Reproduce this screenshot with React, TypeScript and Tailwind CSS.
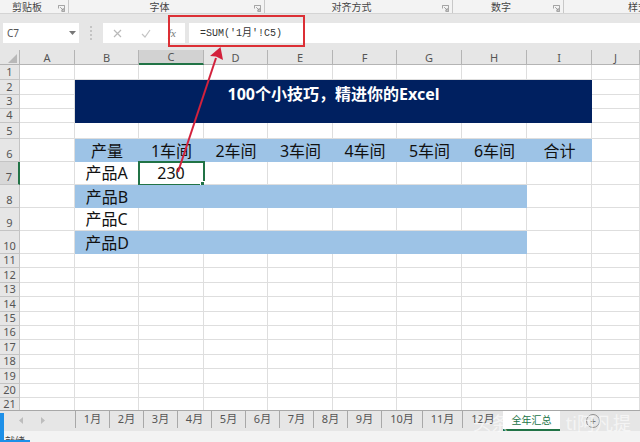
import React from 'react';

const COLUMNS = ['A', 'B', 'C', 'D', 'E', 'F', 'G', 'H', 'I', 'J'];
const ROWS = Array.from({ length: 21 }, (_, i) => i + 1);
const MONTHS = ['1月', '2月', '3月', '4月', '5月', '6月', '7月', '8月', '9月'];

// rows 6..10 hold the data table, keyed by column letter
const TABLE: Record<number, Record<string, string>> = {
  6: { B: '产量', C: '1车间', D: '2车间', E: '3车间', F: '4车间', G: '5车间', H: '6车间', I: '合计' },
  7: { B: '产品A', C: '230' },
  8: { B: '产品B' },
  9: { B: '产品C' },
  10: { B: '产品D' },
};

const isFilled = (row: number, col: string) => {
  if (row === 6) return 'BCDEFGHI'.includes(col);
  if (row === 8 || row === 10) return 'BCDEFGH'.includes(col);
  return false;
};

// B2:I4 is one merged cell, so its members are not rendered on their own
const isMerged = (row: number, col: string) => row >= 2 && row <= 4 && 'BCDEFGHI'.includes(col);

const Launcher = () => (
  <svg width="7" height="7" viewBox="0 0 8 8" className="absolute right-[3px] top-[5px]" fill="none" stroke="#8a8a8a" strokeWidth="0.9">
    <path d="M0.5 4V0.5H7.5V7.5H4" />
    <path d="M2.5 2.5L6 6M6 3.5V6H3.5" />
  </svg>
);

const RibbonGroup = ({ label, className }: { label: string; className: string }) => (
  <div className={`relative flex h-full items-center justify-center border-r border-[#c8c8c8] ${className}`}>
    <span className="text-[10px] leading-none text-[#444]">{label}</span>
    <Launcher />
  </div>
);

const FormulaBar = () => (
  <div className="flex h-[36px] items-start bg-[#e6e6e6] pt-[9px]">
    <div className="ml-[3px] flex h-[20px] w-[76px] items-center justify-between bg-white pl-[4px] pr-[3px]">
      <span className="text-[10px] text-[#555]">C7</span>
      <svg width="7" height="4" viewBox="0 0 7 4"><path d="M0 0H7L3.5 4Z" fill="#777" /></svg>
    </div>
    <div className="flex h-[20px] w-[24px] flex-col items-center justify-center gap-[2px]">
      <span className="h-[2px] w-[2px] bg-[#c4c4c4]" />
      <span className="h-[2px] w-[2px] bg-[#c4c4c4]" />
      <span className="h-[2px] w-[2px] bg-[#c4c4c4]" />
      <span className="h-[2px] w-[2px] bg-[#c4c4c4]" />
    </div>
    <div className="flex h-[20px] w-[82px] items-center bg-white pl-[10px]">
      <svg width="9" height="9" viewBox="0 0 9 9" fill="none" stroke="#b9b9b9" strokeWidth="1.2"><path d="M1 1L8 8M8 1L1 8" /></svg>
      <svg width="10" height="9" viewBox="0 0 10 9" fill="none" stroke="#c4c4c4" strokeWidth="1.2" className="ml-[19px]"><path d="M1 5L4 8L9 1" /></svg>
      <span className="ml-[17px] font-['Liberation_Serif',serif] text-[11px] italic leading-none text-[#777]">fx</span>
    </div>
    <div className="ml-[4px] flex h-[20px] flex-1 items-center bg-white pl-[11px]">
      <span className="font-['Liberation_Mono','Noto_Sans_CJK_SC',monospace] text-[10px] text-[#333]">=SUM('1月'!C5)</span>
    </div>
  </div>
);

const Sheet = () => (
  <div className="h-[360px] overflow-hidden bg-white">
    <div className="grid grid-cols-[20px_55px_64px_65px_64px_65px_64px_65px_65px_65px_48px] grid-rows-[15px_15px_15px_14px_14px_16px_23px_23px_23px_23px_23px_repeat(11,14.4px)]">
      {/* corner */}
      <div className="flex items-end justify-end border-b border-r border-[#b4b4b4] bg-[#e6e6e6] pb-[1px] pr-[2px]">
        <svg width="9" height="9" viewBox="0 0 9 9"><path d="M9 0V9H0Z" fill="#b8b8b8" /></svg>
      </div>
      {COLUMNS.map((col) => (
        <div
          key={col}
          className={`flex items-center justify-center border-r text-[11px] leading-none text-[#555] ${
            col === 'C' ? 'border-b-2 border-r-[#b4b4b4] border-b-[#217346] bg-[#d2d2d2]' : 'border-b border-[#b4b4b4] bg-[#e6e6e6]'
          }`}
        >
          {col}
        </div>
      ))}
      {/* merged title B2:I4 */}
      <div className="col-start-3 col-end-11 row-start-3 row-end-6 flex justify-center bg-[#002060] pt-[2px] text-[16px] font-bold leading-[24px] text-white">
        {'100个小技巧\uFF0C精进你的Excel'}
      </div>
      {ROWS.map((row) => (
        <React.Fragment key={row}>
          <div
            className={`flex items-end justify-center border-b text-[11px] leading-[14px] text-[#555] ${
              row === 7 ? 'border-r-2 border-b-[#c4c4c4] border-r-[#217346] bg-[#d8d8d8]' : 'border-r border-[#c4c4c4] bg-[#e6e6e6]'
            }`}
          >
            {row}
          </div>
          {COLUMNS.filter((col) => !isMerged(row, col)).map((col) => {
            const filled = isFilled(row, col);
            const selected = row === 7 && col === 'C';
            return (
              <div
                key={col}
                className={`relative flex items-center justify-center text-[16px] leading-none text-[#111] ${
                  filled ? 'bg-[#9dc3e6]' : 'border-b border-r border-[#dedede]'
                } ${selected ? 'outline-2 -outline-offset-1 outline-[#217346]' : ''}`}
              >
                {TABLE[row]?.[col]}
                {selected && <span className="absolute -bottom-[2px] -right-[2px] h-[5px] w-[5px] border border-white bg-[#217346]" />}
              </div>
            );
          })}
        </React.Fragment>
      ))}
    </div>
  </div>
);

const Tab = ({ label, className = 'w-[34px]' }: { label: string; className?: string }) => (
  <div className={`flex h-[17px] items-center justify-center border-r border-[#a8a8a8] text-[11px] text-[#555] ${className}`}>
    {label}
  </div>
);

const SheetTabs = () => (
  <div className="flex h-[21px] border-t border-[#a8a8a8] bg-[#e6e6e6]">
    <div className="flex h-[17px] w-[76px] items-center border-r border-[#a8a8a8] pl-[19px] pt-[2px]">
      <svg width="4" height="7" viewBox="0 0 4 7"><path d="M4 0V7L0 3.5Z" fill="#bdbdbd" /></svg>
      <svg width="4" height="7" viewBox="0 0 4 7" className="ml-[18px]"><path d="M0 0V7L4 3.5Z" fill="#bdbdbd" /></svg>
    </div>
    {MONTHS.map((m) => (
      <Tab key={m} label={m} />
    ))}
    <Tab label="10月" className="w-[41px]" />
    <Tab label="11月" className="w-[40px]" />
    <Tab label="12月" className="w-[40px] border-r-0" />
    <div className="flex h-[20px] w-[57px] items-center justify-center border-b-2 border-[#217346] bg-white text-[10px] text-[#217346]">
      全年汇总
    </div>
    <div className="ml-[26px] mt-[3px] flex h-[14px] w-[14px] items-center justify-center rounded-full border border-[#8f8f8f] text-[10px] leading-none text-[#777]">
      +
    </div>
  </div>
);

const Annotation = () => (
  <svg width="640" height="442" viewBox="0 0 640 442" fill="none" className="pointer-events-none absolute left-0 top-0">
    <rect x="169" y="16" width="135" height="30" stroke="#dc2f35" strokeWidth="2" />
    <path d="M178 172L216 58" stroke="#d3213c" strokeWidth="2" />
    <path d="M220.5 47L223 60L216 56.5L210 56Z" fill="#d3213c" />
  </svg>
);

export default function App() {
  return (
    <div className="relative h-[442px] w-[640px] overflow-hidden bg-[#f3f3f3] font-['Noto_Sans','Noto_Sans_CJK_SC',sans-serif]">
      <div className="flex h-[14px] items-stretch border-b border-[#d4d4d4] bg-[#f3f3f3]">
        <RibbonGroup label="剪贴板" className="w-[69px] pr-[14px]" />
        <RibbonGroup label="字体" className="w-[196px] pr-[14px]" />
        <RibbonGroup label="对齐方式" className="w-[188px] pr-[14px]" />
        <RibbonGroup label="数字" className="w-[111px] pr-[14px]" />
        <div className="flex flex-1 items-center justify-end">
          <span className="w-[12px] overflow-hidden whitespace-nowrap text-[10px] leading-none text-[#444]">样式</span>
        </div>
      </div>
      <FormulaBar />
      <Sheet />
      <SheetTabs />
      <div className="relative h-[11px] bg-[#f3f3f3]">
        <span className="absolute left-[5px] top-[4px] text-[10px] leading-[12px] text-[#444]">就绪</span>
        <span className="absolute bottom-0 left-0 h-[2px] w-[30px] bg-[#1e90e8]" />
      </div>
      {/* blue sliver on the left edge of the capture */}
      <span className="absolute bottom-0 left-0 h-[29px] w-[4px] bg-[#1e90e8]" />
      {/* site watermark burnt into the screenshot */}
      <div className="absolute left-[473px] top-[412px] flex w-[158px] justify-between text-[18px] leading-[22px] text-white/60">
        <span>头条</span>
        <span>ti阿凡提</span>
      </div>
      <Annotation />
    </div>
  );
}
